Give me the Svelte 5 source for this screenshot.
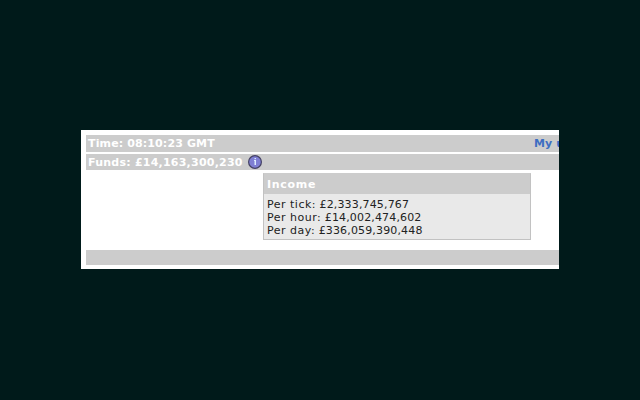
<script>
  const income = [
    { label: 'Per tick', value: '£2,333,745,767' },
    { label: 'Per hour', value: '£14,002,474,602' },
    { label: 'Per day', value: '£336,059,390,448' }
  ];
</script>

<main>
  <section class="panel">
    <div class="bar time">
      <span class="clock">Time: 08:10:23 GMT</span>
      <a class="account" href="#account">My u</a>
    </div>
    <div class="bar funds">
      <span class="balance">Funds: £14,163,300,230</span>
      <svg class="info" viewBox="0 0 14 14" width="14" height="14" aria-label="Income details">
        <circle cx="7" cy="7" r="6.4" fill="#7f7fd3" stroke="#454263" stroke-width="1.2" />
        <path d="M6 5h2v5H6.5V6H6z" fill="#dcecff" />
        <rect x="6.5" y="3" width="1.5" height="1.2" fill="#dcecff" />
      </svg>
    </div>
    <div class="content">
      <div class="income">
        <h2>Income</h2>
        <div class="rates">
          {#each income as row}
            <div><span class="label">{row.label}:</span> <span class="value">{row.value}</span></div>
          {/each}
        </div>
      </div>
    </div>
    <div class="bar footer"></div>
  </section>
</main>

<style>
  :global(body) {
    background: #001a1a;
  }
  main {
    width: 640px;
    height: 400px;
    box-sizing: border-box;
    padding: 130px 81px 131px;
    background: #001a1a;
    overflow: hidden;
    font-family: Verdana, "DejaVu Sans", sans-serif;
    font-size: 11px;
  }
  .panel {
    height: 139px;
    box-sizing: border-box;
    padding: 5px 0 4px 5px;
    background: #fff;
    overflow: hidden;
    display: flex;
    flex-direction: column;
  }
  .bar {
    flex: none;
    display: flex;
    align-items: center;
    background: #ccc;
    color: #fff;
    font-weight: bold;
    white-space: nowrap;
    padding-left: 2px;
  }
  .time {
    height: 17px;
    margin-bottom: 2px;
    justify-content: space-between;
    overflow: hidden;
  }
  .clock {
    letter-spacing: 0.13px;
  }
  .account {
    width: 25px;
    color: #3d6ec2;
    text-decoration: none;
    letter-spacing: 0.1px;
  }
  .funds {
    height: 16px;
  }
  .balance {
    letter-spacing: 0.23px;
  }
  .info {
    margin-left: 5px;
  }
  .content {
    flex: 1;
    padding: 3px 28px 10px 177px;
  }
  .income {
    height: 67px;
    box-sizing: border-box;
    border: 1px solid #c2c2c2;
    border-top-color: #ccc;
    background: #e9e9e9;
    color: #222;
  }
  h2 {
    margin: 0;
    height: 20px;
    line-height: 21px;
    padding-left: 3px;
    background: #ccc;
    color: #fff;
    font-size: 11px;
    letter-spacing: 0.7px;
  }
  .rates {
    padding: 4px 3px;
    line-height: 13px;
  }
  .label {
    letter-spacing: 0.5px;
  }
  .value {
    letter-spacing: 0.15px;
  }
  .footer {
    height: 15px;
  }
</style>
